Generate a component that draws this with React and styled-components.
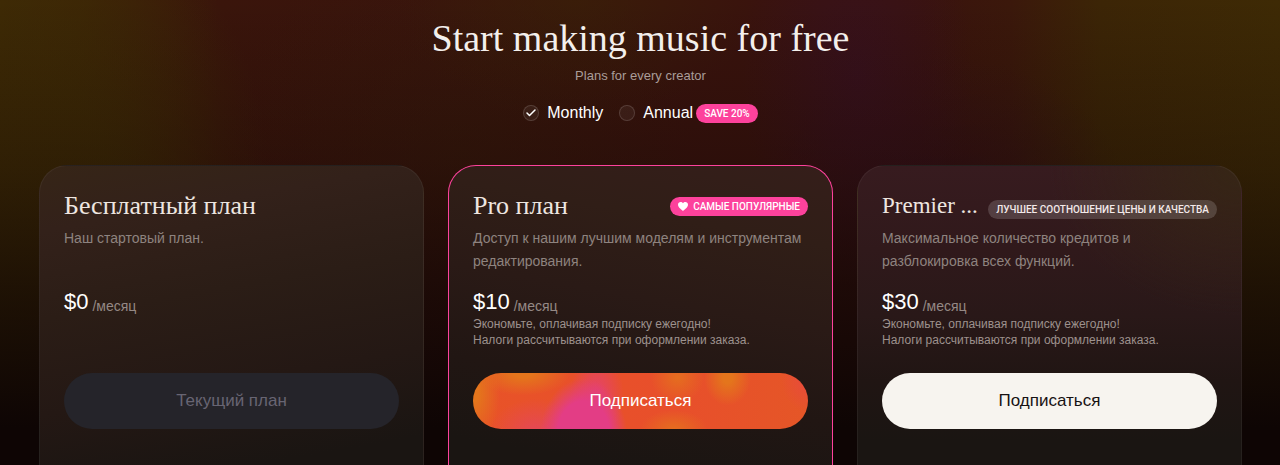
import React, { useState } from 'react';
import styled, { createGlobalStyle } from 'styled-components';
import { Check } from 'lucide-react';

const GlobalStyle = createGlobalStyle`
  * {
    box-sizing: border-box;
  }
  body {
    margin: 0;
    background: #0e0504;
    color: #fff;
    font-family: 'Liberation Sans', Arial, sans-serif;
  }
  h1, h2, p {
    margin: 0;
    font-weight: 400;
  }
`;

const Page = styled.main`
  display: flex;
  flex-direction: column;
  min-height: 100vh;
  padding: 14px 38px 0 39px;
  background:
    linear-gradient(to bottom, rgba(14, 5, 4, 0) 0%, rgba(14, 5, 4, 0.3) 36%, rgba(14, 5, 4, 0.65) 62%, #0e0504 92%),
    radial-gradient(ellipse 9% 45% at 67% 16%, rgba(56, 17, 30, 0.9), rgba(56, 17, 30, 0) 100%),
    radial-gradient(ellipse 14% 30% at 74% 42%, rgba(50, 15, 28, 0.6), rgba(50, 15, 28, 0) 100%),
    radial-gradient(ellipse 14% 26% at 45% 0%, rgba(58, 31, 8, 0.8), rgba(58, 31, 8, 0) 100%),
    radial-gradient(ellipse 18% 50% at 36% 32%, rgba(54, 27, 10, 0.6), rgba(54, 27, 10, 0) 100%),
    radial-gradient(ellipse 18% 60% at 3% 38%, rgba(62, 42, 5, 0.9) 30%, rgba(62, 42, 5, 0) 100%),
    linear-gradient(to right, #3e2a05 0%, #3c2506 6%, #3a150b 17%, #3a130d 34%, #3a130d 72%, #3b180b 79%, #3c2506 86%, #3e2a05 100%);
`;

const Header = styled.header`
  display: flex;
  flex-direction: column;
  align-items: center;
  margin-bottom: 42px;
`;

const Heading = styled.h1`
  color: #f3efec;
  font-family: 'Liberation Serif', 'Times New Roman', serif;
  font-size: 38px;
  line-height: 48px;
  text-align: center;
`;

const Subheading = styled.p`
  margin-top: 4px;
  color: #aa9d99;
  font-size: 13px;
  line-height: 20px;
`;

const Periods = styled.div`
  display: flex;
  align-items: center;
  margin-top: 17px;
  gap: 16px;
`;

const Period = styled.div`
  display: flex;
  align-items: center;
  gap: 3px;
`;

const PeriodLabel = styled.label`
  display: flex;
  align-items: center;
  gap: 8px;
  font-size: 16px;
  line-height: 20px;
  cursor: pointer;
`;

const Dot = styled.span`
  display: grid;
  place-items: center;
  width: 16px;
  height: 16px;
  input,
  svg {
    grid-area: 1 / 1;
  }
`;

const Radio = styled.input`
  appearance: none;
  width: 16px;
  height: 16px;
  margin: 0;
  border: 1px solid rgba(255, 255, 255, 0.14);
  border-radius: 50%;
  background: rgba(255, 255, 255, 0.05);
  cursor: pointer;
`;

const Badge = styled.span`
  display: flex;
  flex-shrink: 0;
  align-items: center;
  gap: 5px;
  height: 19px;
  padding: 0 8px;
  border-radius: 10px;
  background: ${props => (props.$muted ? 'rgba(255, 255, 255, 0.16)' : '#fd429c')};
  color: ${props => (props.$muted ? '#f3e9e9' : '#fff')};
  font-family: Roboto, 'Liberation Sans', sans-serif;
  font-size: 10px;
  font-weight: 500;
  white-space: nowrap;
`;

const Cards = styled.div`
  display: grid;
  flex: 1;
  grid-template-columns: repeat(3, minmax(0, 1fr));
  gap: 24px;
`;

const Card = styled.section`
  display: flex;
  flex-direction: column;
  padding: 24px 24px 36px;
  border: 1px solid ${props => (props.$featured ? '#fd429c' : 'rgba(255, 255, 255, 0.05)')};
  border-bottom: none;
  border-radius: 28px 28px 0 0;
  background: ${props => props.$background};
`;

const CardTop = styled.div`
  display: flex;
  align-items: ${props => (props.$baseline ? 'baseline' : 'center')};
  justify-content: space-between;
  gap: 8px;
  height: 32px;
  margin-bottom: 5px;
`;

const Title = styled.h2`
  overflow: hidden;
  color: #eee6e0;
  font-family: 'Liberation Serif', 'Times New Roman', serif;
  font-size: ${props => (props.$compact ? 23 : 26)}px;
  line-height: 32px;
  text-overflow: ellipsis;
  white-space: nowrap;
`;

const Description = styled.p`
  min-height: 46px;
  color: #8e837f;
  font-size: 14px;
  line-height: 23px;
`;

const Price = styled.p`
  display: flex;
  align-items: flex-end;
  gap: 4px;
  margin-top: 15px;
  font-size: 22px;
  line-height: 28px;
`;

const PerMonth = styled.span`
  color: #958985;
  font-size: 14px;
  line-height: 20px;
`;

const Notes = styled.div`
  min-height: 32px;
  margin-bottom: 25px;
  color: #9d918d;
  font-size: 12px;
  line-height: 16px;
`;

const BUTTON_COLORS = {
  current: { background: '#25242a', color: '#686573' },
  light: { background: '#f7f4ef', color: '#171213' },
  glow: {
    background: `
      radial-gradient(ellipse 13% 100% at 33% 110%, #e33d85 0%, #e33d85 60%, rgba(227, 61, 133, 0) 100%),
      radial-gradient(ellipse 8% 75% at 37% 38%, rgba(227, 61, 133, 0.75), rgba(227, 61, 133, 0) 100%),
      radial-gradient(ellipse 14% 60% at 19% 105%, rgba(227, 61, 133, 0.5), rgba(227, 61, 133, 0) 100%),
      radial-gradient(ellipse 7% 50% at 76% 8%, #e4751c 20%, rgba(228, 117, 28, 0) 100%),
      radial-gradient(ellipse 8% 46% at 61% 8%, rgba(228, 117, 28, 0.8), rgba(228, 117, 28, 0) 100%),
      radial-gradient(ellipse 14% 40% at 15% 0%, #e4751c 20%, rgba(228, 117, 28, 0) 100%),
      radial-gradient(ellipse 8% 90% at 0% 35%, #e4751c 20%, rgba(228, 117, 28, 0) 100%),
      radial-gradient(ellipse 10% 34% at 60% 100%, rgba(228, 117, 28, 0.8), rgba(228, 117, 28, 0) 100%),
      radial-gradient(ellipse 8% 60% at 100% 10%, rgba(233, 72, 64, 0.9), rgba(233, 72, 64, 0) 100%),
      linear-gradient(to right, #e85328, #e84f2b 60%, #e55627)
    `,
    color: '#fff',
  },
};

const PlanButton = styled.button`
  width: 100%;
  height: 56px;
  border: none;
  border-radius: 28px;
  background: ${props => BUTTON_COLORS[props.$look].background};
  color: ${props => BUTTON_COLORS[props.$look].color};
  font-family: inherit;
  font-size: 17px;
  cursor: pointer;
  &:disabled {
    cursor: default;
  }
`;

const Heart = () => (
  <svg width="10" height="9" viewBox="0 0 20 18" fill="currentColor" aria-hidden="true">
    <path d="M10 18 C8 16 0 11 0 5.500 C0 2.200 2.400 0 5.300 0 C7.200 0 9 1 10 2.700 C11 1 12.800 0 14.700 0 C17.600 0 20 2.200 20 5.500 C20 11 12 16 10 18 Z" />
  </svg>
);

const PLANS = [
  {
    title: 'Бесплатный план',
    description: 'Наш стартовый план.',
    price: '$0',
    notes: [],
    action: 'Текущий план',
    look: 'current',
    background: 'linear-gradient(170deg, #362517 0%, #33211a 18%, #2b1d16 42%, #241814 68%, #1a1512 92%)',
  },
  {
    title: 'Pro план',
    badge: 'САМЫЕ ПОПУЛЯРНЫЕ',
    featured: true,
    description: 'Доступ к нашим лучшим моделям и инструментам редактирования.',
    price: '$10',
    notes: ['Экономьте, оплачивая подписку ежегодно!', 'Налоги рассчитываются при оформлении заказа.'],
    action: 'Подписаться',
    look: 'glow',
    background: 'linear-gradient(190deg, #351e1a 0%, #301e17 22%, #2a1a16 45%, #211613 70%, #1a1512 92%)',
  },
  {
    title: 'Premier ...',
    badge: 'ЛУЧШЕЕ СООТНОШЕНИЕ ЦЕНЫ И КАЧЕСТВА',
    compact: true,
    description: 'Максимальное количество кредитов и разблокировка всех функций.',
    price: '$30',
    notes: ['Экономьте, оплачивая подписку ежегодно!', 'Налоги рассчитываются при оформлении заказа.'],
    action: 'Подписаться',
    look: 'light',
    background:
      'radial-gradient(ellipse 50% 50% at 100% 0%, rgba(54, 39, 20, 0.9), rgba(54, 39, 20, 0) 100%), linear-gradient(180deg, #371b1f 0%, #30191b 28%, #291818 50%, #201513 72%, #1a1512 92%)',
  },
];

const Plan = ({ plan }) => (
  <Card $featured={plan.featured} $background={plan.background}>
    <CardTop $baseline={plan.compact}>
      <Title $compact={plan.compact}>{plan.title}</Title>
      {plan.badge && (
        <Badge $muted={!plan.featured}>
          {plan.featured && <Heart />}
          {plan.badge}
        </Badge>
      )}
    </CardTop>
    <Description>{plan.description}</Description>
    <Price>
      {plan.price}
      <PerMonth>/месяц</PerMonth>
    </Price>
    <Notes>
      {plan.notes.map(note => (
        <p key={note}>{note}</p>
      ))}
    </Notes>
    <PlanButton type="button" $look={plan.look} disabled={plan.look === 'current'}>
      {plan.action}
    </PlanButton>
  </Card>
);

const App = () => {
  const [period, setPeriod] = useState('Monthly');

  return (
    <>
      <GlobalStyle />
      <Page>
        <Header>
          <Heading>Start making music for free</Heading>
          <Subheading>Plans for every creator</Subheading>
          <Periods role="radiogroup" aria-label="Billing period">
            {['Monthly', 'Annual'].map(name => (
              <Period key={name}>
                <PeriodLabel htmlFor={name}>
                  <Dot>
                    <Radio
                      type="radio"
                      name="period"
                      id={name}
                      checked={period === name}
                      onChange={() => setPeriod(name)}
                    />
                    {period === name && <Check size={12} strokeWidth={3} />}
                  </Dot>
                  {name}
                </PeriodLabel>
                {name === 'Annual' && <Badge>SAVE 20%</Badge>}
              </Period>
            ))}
          </Periods>
        </Header>
        <Cards>
          {PLANS.map(plan => (
            <Plan key={plan.title} plan={plan} />
          ))}
        </Cards>
      </Page>
    </>
  );
};

export default App;
